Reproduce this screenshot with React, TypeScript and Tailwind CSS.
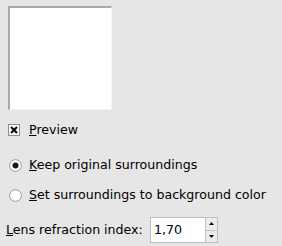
import React from "react";

function Check() {
  return (
    <div className="w-[12px] h-[12px] border border-[#8a8a8a] bg-white flex items-center justify-center">
      <svg width="8" height="8" viewBox="0 0 8 8">
        <path d="M1 1 L7 7 M7 1 L1 7" stroke="#000" strokeWidth="2" />
      </svg>
    </div>
  );
}

function Radio({ on }: { on?: boolean }) {
  return (
    <svg width="13" height="13" viewBox="0 0 13 13">
      <circle cx="6.5" cy="6.5" r="5.9" fill="#fff" stroke="#9a9a9a" strokeWidth="1" />
      {on && <circle cx="6.5" cy="6.5" r="3" fill="#1a1a1a" />}
    </svg>
  );
}

export default function App() {
  return (
    <div
      className="w-[282px] h-[246px] bg-[#e6e6e6] text-[12.6px] text-black overflow-hidden"
      style={{ fontFamily: '"DejaVu Sans", sans-serif' }}
    >
      <div className="pt-[6px] pl-[8px]">
        <div className="w-[104px] h-[104px] bg-white border-t-2 border-l-2 border-t-[#a8a8a8] border-l-[#a8a8a8] border-r border-b border-r-[#f4f4f4] border-b-[#f4f4f4]" />
      </div>
      <div className="flex items-center gap-[9px] pl-[8px] mt-[13px] h-[14px]">
        <Check />
        <span>
          <span className="underline">P</span>review
        </span>
      </div>
      <div className="flex items-center gap-[7px] pl-[9px] mt-[21px] h-[14px]">
        <Radio on />
        <span>
          <span className="underline">K</span>eep original surroundings
        </span>
      </div>
      <div className="flex items-center gap-[7px] pl-[9px] mt-[16px] h-[14px]">
        <Radio />
        <span>
          <span className="underline">S</span>et surroundings to background color
        </span>
      </div>
      <div className="flex items-center pl-[6px] mt-[15px] h-[26px]">
        <span>
          <span className="underline">L</span>ens refraction index:
        </span>
        <div className="ml-auto mr-[64px] flex h-[26px] w-[68px] border border-[#bdbdbd] bg-white">
          <div className="flex-1 pl-[3px] flex items-center">1,70</div>
          <div className="w-[12px] flex flex-col bg-[#ececec] border-l border-[#c4c4c4]">
            <div className="flex-1 flex items-center justify-center border-b border-[#c4c4c4]">
              <svg width="5" height="3" viewBox="0 0 5 3"><path d="M0 3 L2.5 0 L5 3 Z" fill="#000" /></svg>
            </div>
            <div className="flex-1 flex items-center justify-center">
              <svg width="5" height="3" viewBox="0 0 5 3"><path d="M0 0 L2.5 3 L5 0 Z" fill="#000" /></svg>
            </div>
          </div>
        </div>
      </div>
    </div>
  );
}
